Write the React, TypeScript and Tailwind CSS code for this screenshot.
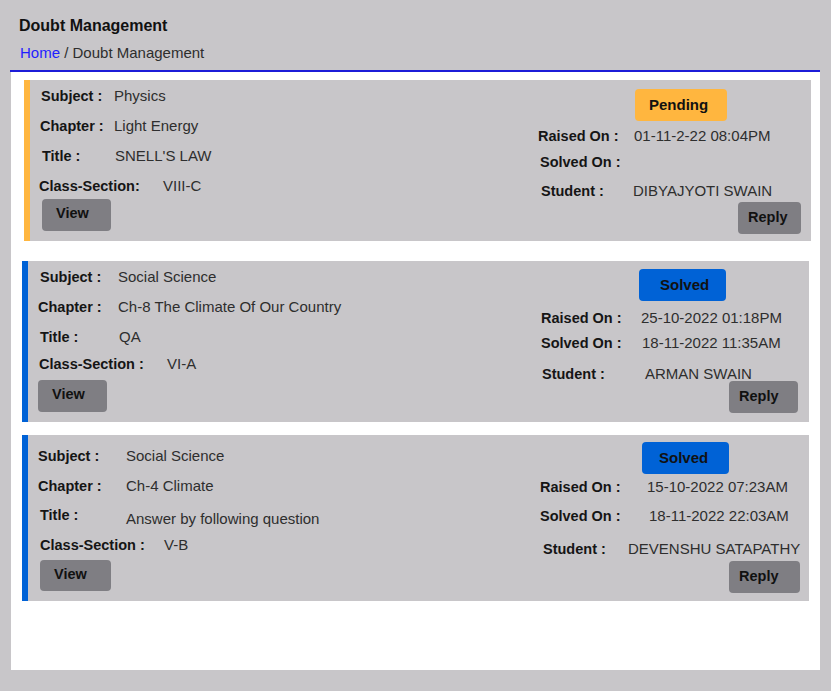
import React from "react";

type Row = { label: string; value: string; rowCls: string; labelCls: string; valueCls?: string };
type Card = {
  cardCls: string;
  leftW: string;
  left: Row[];
  viewCls: string;
  right: Row[];
  badge: string;
  badgeCls: string;
  replyCls: string;
};

const cards: Card[] = [
  {
    cardCls: "ml-[13px] mr-[9px] mt-[8px] h-[161px] border-l-[6px] border-[#ffb63f]",
    leftW: "w-[508px]",
    left: [
      { label: "Subject :", value: "Physics", rowCls: "mt-[8px]", labelCls: "ml-[11px] w-[73px]" },
      { label: "Chapter :", value: "Light Energy", rowCls: "mt-[14px]", labelCls: "ml-[10px] w-[74px]" },
      { label: "Title :", value: "SNELL'S LAW", rowCls: "mt-[14px]", labelCls: "ml-[12px] w-[73px]" },
      { label: "Class-Section:", value: "VIII-C", rowCls: "mt-[14px]", labelCls: "ml-[9px] w-[124px]" },
    ],
    viewCls: "mt-[5px] ml-[12px] w-[69px] h-[32px]",
    badge: "Pending",
    badgeCls: "mt-[9px] ml-[97px] w-[92px] bg-[#ffb63f] pl-[14px]",
    right: [
      { label: "Raised On :", value: "01-11-2-22 08:04PM", rowCls: "mt-[7px]", labelCls: "ml-0 w-[96px]" },
      { label: "Solved On :", value: "", rowCls: "mt-[10px]", labelCls: "ml-[2px] w-[96px]" },
      { label: "Student :", value: "DIBYAJYOTI SWAIN", rowCls: "mt-[13px]", labelCls: "ml-[3px] w-[92px]" },
    ],
    replyCls: "mt-[3px] ml-[200px] w-[63px]",
  },
  {
    cardCls: "ml-[11px] mr-[11px] mt-[20px] h-[161px] border-l-[6px] border-[#0062d6]",
    leftW: "w-[513px]",
    left: [
      { label: "Subject :", value: "Social Science", rowCls: "mt-[8px]", labelCls: "ml-[12px] w-[78px]" },
      { label: "Chapter :", value: "Ch-8 The Climate Of Our Country", rowCls: "mt-[14px]", labelCls: "ml-[10px] w-[80px]" },
      { label: "Title :", value: "QA", rowCls: "mt-[14px]", labelCls: "ml-[12px] w-[79px]" },
      { label: "Class-Section :", value: "VI-A", rowCls: "mt-[11px]", labelCls: "ml-[11px] w-[128px]" },
    ],
    viewCls: "mt-[8px] ml-[10px] w-[69px] h-[32px]",
    badge: "Solved",
    badgeCls: "mt-[8px] ml-[98px] w-[87px] bg-[#0062d6] pl-[21px]",
    right: [
      { label: "Raised On :", value: "25-10-2022 01:18PM", rowCls: "mt-[9px]", labelCls: "ml-0 w-[100px]" },
      { label: "Solved On :", value: "18-11-2022 11:35AM", rowCls: "mt-[9px]", labelCls: "ml-0 w-[101px]" },
      { label: "Student :", value: "ARMAN SWAIN", rowCls: "mt-[15px]", labelCls: "ml-[1px] w-[103px]" },
    ],
    replyCls: "mt-[-1px] ml-[188px] w-[69px]",
  },
  {
    cardCls: "ml-[11px] mr-[11px] mt-[13px] h-[166px] border-l-[6px] border-[#0062d6]",
    leftW: "w-[512px]",
    left: [
      { label: "Subject :", value: "Social Science", rowCls: "mt-[13px]", labelCls: "ml-[10px] w-[88px]" },
      { label: "Chapter :", value: "Ch-4 Climate", rowCls: "mt-[14px]", labelCls: "ml-[10px] w-[88px]" },
      { label: "Title :", value: "Answer by following question", rowCls: "mt-[13px]", labelCls: "ml-[12px] w-[86px]", valueCls: "mt-[4px]" },
      { label: "Class-Section :", value: "V-B", rowCls: "mt-[10px]", labelCls: "ml-[12px] w-[124px]" },
    ],
    viewCls: "mt-[7px] ml-[12px] w-[71px] h-[31px]",
    badge: "Solved",
    badgeCls: "mt-[7px] ml-[102px] w-[87px] bg-[#0062d6] pl-[17px]",
    right: [
      { label: "Raised On :", value: "15-10-2022 07:23AM", rowCls: "mt-[5px]", labelCls: "ml-0 w-[107px]" },
      { label: "Solved On :", value: "18-11-2022 22:03AM", rowCls: "mt-[13px]", labelCls: "ml-0 w-[109px]" },
      { label: "Student :", value: "DEVENSHU SATAPATHY", rowCls: "mt-[17px]", labelCls: "ml-[3px] w-[85px]" },
    ],
    replyCls: "mt-[4px] ml-[189px] w-[71px]",
  },
];

function InfoRow({ r }: { r: Row }) {
  return (
    <div className={`flex items-start leading-[16px] whitespace-nowrap ${r.rowCls}`}>
      <span className={`shrink-0 text-[14.5px] font-bold text-[#151515] ${r.labelCls}`}>{r.label}</span>
      <span className={`text-[15px] text-[#2e2e2e] ${r.valueCls ?? ""}`}>{r.value}</span>
    </div>
  );
}

export default function App() {
  return (
    <div
      className="w-[831px] h-[691px] bg-[#c8c6c9] overflow-hidden"
      style={{ fontFamily: '"Liberation Sans", Arial, sans-serif' }}
    >
      <div className="pt-[16px] pl-[19px] text-[16px] leading-[20px] font-bold text-[#111]">Doubt Management</div>
      <div className="mt-[8px] pl-[20px] text-[15px] leading-[18px] text-[#2e2e2e]">
        <span className="text-[#1f1fff]">Home</span> / Doubt Management
      </div>
      <div className="mt-[8px] ml-[10px] w-[810px] h-[2px] bg-[#1c1cd8]" />
      <div className="ml-[11px] w-[809px] h-[598px] bg-white flex flex-col">
        {cards.map((c, i) => (
          <div key={i} className={`flex bg-[#c8c6c9] ${c.cardCls}`}>
            <div className={`shrink-0 flex flex-col ${c.leftW}`}>
              {c.left.map((r, j) => (
                <InfoRow key={j} r={r} />
              ))}
              <div className={`flex rounded-[4px] bg-[#7f7e83] pl-[14px] pt-[5px] text-[14.5px] leading-[18px] font-bold text-[#111] ${c.viewCls}`}>
                View
              </div>
            </div>
            <div className="flex flex-col">
              <div className={`h-[32px] rounded-[4px] flex items-center text-[15px] font-bold text-[#111] ${c.badgeCls}`}>
                {c.badge}
              </div>
              {c.right.map((r, j) => (
                <InfoRow key={j} r={r} />
              ))}
              <div className={`h-[32px] rounded-[4px] bg-[#7f7e83] flex items-center pl-[10px] text-[14.5px] font-bold text-[#111] ${c.replyCls}`}>
                Reply
              </div>
            </div>
          </div>
        ))}
      </div>
    </div>
  );
}
